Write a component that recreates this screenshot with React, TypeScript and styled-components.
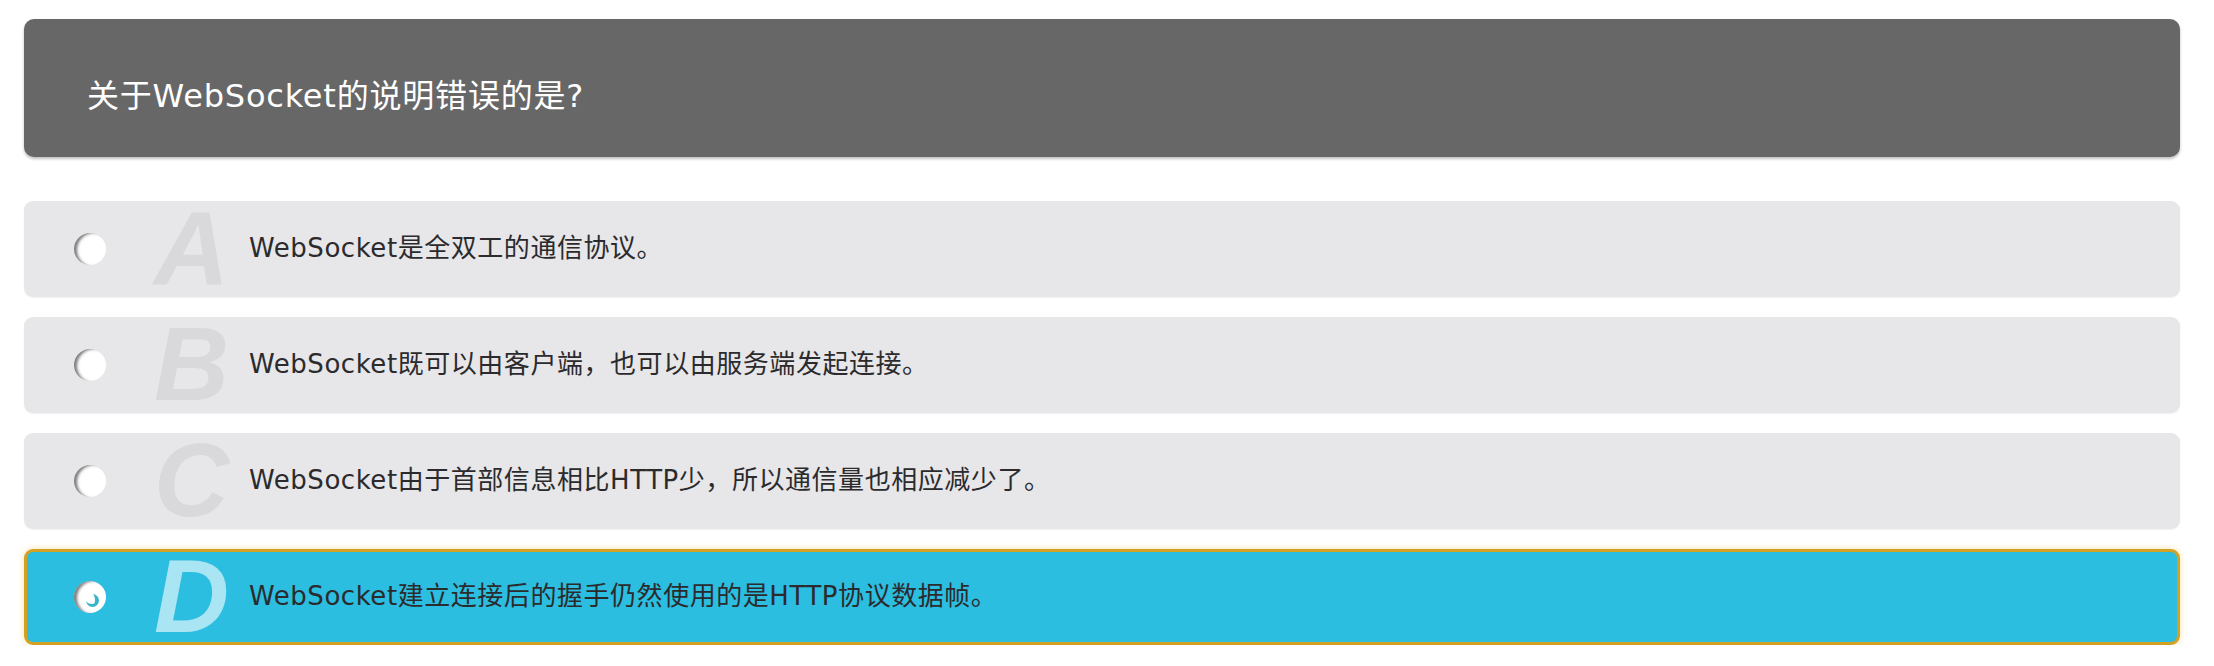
import React from "react";
import styled, { createGlobalStyle } from "styled-components";

const GlobalStyle = createGlobalStyle`
  html, body {
    margin: 0;
    padding: 0;
    background: #ffffff;
  }
  body {
    font-family: "DejaVu Sans", "Noto Sans CJK SC", sans-serif;
  }
`;

const Page = styled.div`
  display: flex;
  flex-direction: column;
  padding: 19px 34px 0 24px;
`;

const QuestionBar = styled.div`
  height: 138px;
  box-sizing: border-box;
  background: #676768;
  border-radius: 10px;
  box-shadow: 0 2px 3px rgba(0, 0, 0, 0.25);
  display: flex;
  align-items: center;
  padding: 9px 0 0 63px;
  color: #ffffff;
  font-size: 32px;
  letter-spacing: 0.8px;
`;

const OptionList = styled.div`
  display: flex;
  flex-direction: column;
  gap: 20px;
  margin-top: 44px;
`;

const OptionRow = styled.div<{ $selected?: boolean }>`
  height: 96px;
  box-sizing: border-box;
  border-radius: 9px;
  display: flex;
  align-items: center;
  background: ${(p) => (p.$selected ? "#2bbee0" : "#e7e6e9")};
  border: ${(p) => (p.$selected ? "3px solid #d3a224" : "0")};
  box-shadow: ${(p) =>
    p.$selected
      ? "0 0 6px rgba(245, 205, 110, 0.6)"
      : "0 1px 2px rgba(0, 0, 0, 0.06)"};
  padding-left: ${(p) => (p.$selected ? "47px" : "50px")};
`;

const Radio = styled.span<{ $checked?: boolean }>`
  position: relative;
  flex: none;
  width: 32px;
  height: 32px;
  border-radius: 50%;
  background: #ffffff;
  box-shadow: inset 4px 1px 3px -1px rgba(80, 80, 80, 0.75);
`;

const RadioMark = styled.span`
  position: absolute;
  left: 12px;
  top: 13px;
  width: 13px;
  height: 13px;
  border-radius: 50%;
  border-right: 4px solid #3ab4c9;
  border-bottom: 3px solid #3ab4c9;
  box-sizing: border-box;
`;

const Letter = styled.span<{ $selected?: boolean }>`
  flex: none;
  width: 123px;
  padding-left: 8px;
  box-sizing: border-box;
  text-align: right;
  font-family: "Liberation Sans", Arial, sans-serif;
  font-weight: 700;
  font-style: italic;
  font-size: 104px;
  line-height: 0.9;
  color: ${(p) => (p.$selected ? "#a9e5f3" : "#d9d8db")};
`;

const OptionText = styled.span`
  margin: 0 0 7px 20px;
  font-size: 26px;
  color: #2b2b2d;
  letter-spacing: 0.55px;
  white-space: nowrap;
`;

const options = [
  { key: "A", text: "WebSocket是全双工的通信协议。" },
  { key: "B", text: "WebSocket既可以由客户端，也可以由服务端发起连接。" },
  { key: "C", text: "WebSocket由于首部信息相比HTTP少，所以通信量也相应减少了。" },
  { key: "D", text: "WebSocket建立连接后的握手仍然使用的是HTTP协议数据帧。" },
];

export default function App() {
  const selected = "D";
  return (
    <>
      <GlobalStyle />
      <Page>
        <QuestionBar>关于WebSocket的说明错误的是?</QuestionBar>
        <OptionList>
          {options.map((o) => {
            const isSel = o.key === selected;
            return (
              <OptionRow key={o.key} $selected={isSel}>
                <Radio $checked={isSel}>{isSel && <RadioMark />}</Radio>
                <Letter $selected={isSel}>{o.key}</Letter>
                <OptionText>{o.text}</OptionText>
              </OptionRow>
            );
          })}
        </OptionList>
      </Page>
    </>
  );
}
